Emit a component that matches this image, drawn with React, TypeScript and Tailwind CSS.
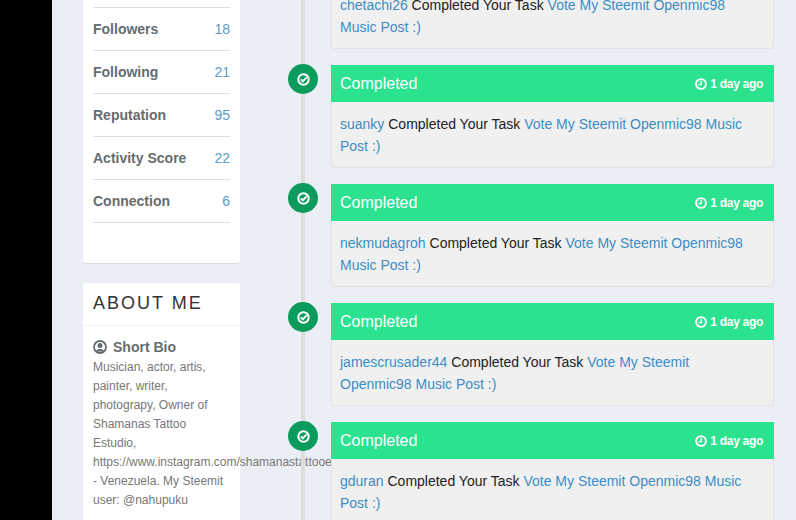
import React from "react";

const stats = [
  ["Followers", "18"],
  ["Following", "21"],
  ["Reputation", "95"],
  ["Activity Score", "22"],
  ["Connection", "6"],
];

const tasks = [
  ["chetachi26", "Vote My Steemit Openmic98 Music Post :)"],
  ["suanky", "Vote My Steemit Openmic98 Music Post :)"],
  ["nekmudagroh", "Vote My Steemit Openmic98 Music Post :)"],
  ["jamescrusader44", "Vote My Steemit Openmic98 Music Post :)"],
  ["gduran", "Vote My Steemit Openmic98 Music Post :)"],
];

function CheckCircleIcon() {
  return (
    <svg width="13" height="13" viewBox="0 0 13 13" fill="none" stroke="currentColor">
      <circle cx="6.5" cy="6.5" r="5.2" strokeWidth="2" />
      <path d="M3.9 6.4 L5.8 8.3 L9.6 4.4" strokeWidth="1.9" />
    </svg>
  );
}

function ClockIcon() {
  return (
    <svg width="12" height="12" viewBox="0 0 12 12" fill="none" stroke="currentColor">
      <circle cx="6" cy="6" r="4.9" strokeWidth="1.9" />
      <path d="M6.2 2.8 V6.6 H3.6" strokeWidth="1.4" />
    </svg>
  );
}

function UserCircleIcon() {
  return (
    <svg width="14" height="14" viewBox="0 0 14 14" fill="none">
      <circle cx="7" cy="7" r="6" stroke="currentColor" strokeWidth="1.8" />
      <circle cx="7" cy="5.6" r="2.5" fill="currentColor" />
      <path d="M3 11.4 C3.6 9.4 5 9 7 9 C9 9 10.4 9.4 11 11.4 Z" fill="currentColor" />
    </svg>
  );
}

function TaskCard({ user, title }: { user: string; title: string }) {
  return (
    <div className="relative mb-[16px] h-[103px] shrink-0">
      <div className="absolute left-[-43px] top-[-1px] flex h-[30px] w-[30px] items-center justify-center rounded-full bg-[#0b9c5d] text-white">
        <CheckCircleIcon />
      </div>
      <div className="flex h-[37px] items-center justify-between bg-[#2be38f] pl-[9px] pr-[11px] text-white">
        <span className="text-[16px]">Completed</span>
        <span className="flex items-center gap-[3px] text-[12px] font-bold tracking-[-0.3px]">
          <ClockIcon />1 day ago
        </span>
      </div>
      <div className="h-[66px] rounded-b-[3px] border border-t-0 border-[#e3e3e3] bg-[#f0f0f0] pl-[8px] pr-[10px] pt-[11px] text-[14px] leading-[22px] text-[#222]">
        <span className="text-[#3c8dc5]">{user}</span> Completed Your Task{" "}
        <span className="text-[#3c8dc5]">{title}</span>
      </div>
    </div>
  );
}

export default function App() {
  return (
    <div className="flex h-[520px] w-[796px] overflow-hidden bg-[#ebeff5] font-['Liberation_Sans',Arial,sans-serif]">
      <div className="w-[52px] shrink-0 bg-black" />
      <aside className="ml-[31px] flex w-[157px] shrink-0 flex-col gap-5">
        <section className="h-[263px] shrink-0 rounded-b-[3px] bg-white px-[10px] pt-[7px] shadow-[0_1px_1px_rgba(0,0,0,0.08)]">
          <ul className="border-t border-[#d8e0e4]">
            {stats.map(([label, value]) => (
              <li
                key={label}
                className="flex h-[43px] items-center justify-between border-b border-[#d8e0e4] text-[14px]"
              >
                <span className="font-bold text-[#666c70]">{label}</span>
                <span className="text-[#6199c2]">{value}</span>
              </li>
            ))}
          </ul>
        </section>
        <section className="h-[300px] shrink-0 rounded-t-[3px] bg-white">
          <h3 className="flex h-[43px] items-center border-b border-[#f1f1f1] px-[10px] pb-[2px] text-[18px] font-normal tracking-[2px] text-[#333]">
            ABOUT ME
          </h3>
          <div className="px-[10px] pt-[10px]">
            <div className="flex items-center gap-[6px] text-[14px] font-bold leading-[22px] text-[#666c70]">
              <UserCircleIcon />
              Short Bio
            </div>
            <p className="text-[12px] leading-[19px] text-[#777]">
              Musician, actor, artis, painter, writer, photograpy, Owner of Shamanas Tattoo Estudio,
              https://www.instagram.com/shamanastattooestudio - Venezuela. My Steemit user: @nahupuku
            </p>
          </div>
        </section>
      </aside>
      <main className="relative ml-[61px] mt-[-54px] flex h-[640px] w-[473px] shrink-0 flex-col border-l-4 border-[#dddddd] pl-[26px]">
        {tasks.map(([user, title]) => (
          <TaskCard key={user} user={user} title={title} />
        ))}
      </main>
    </div>
  );
}
